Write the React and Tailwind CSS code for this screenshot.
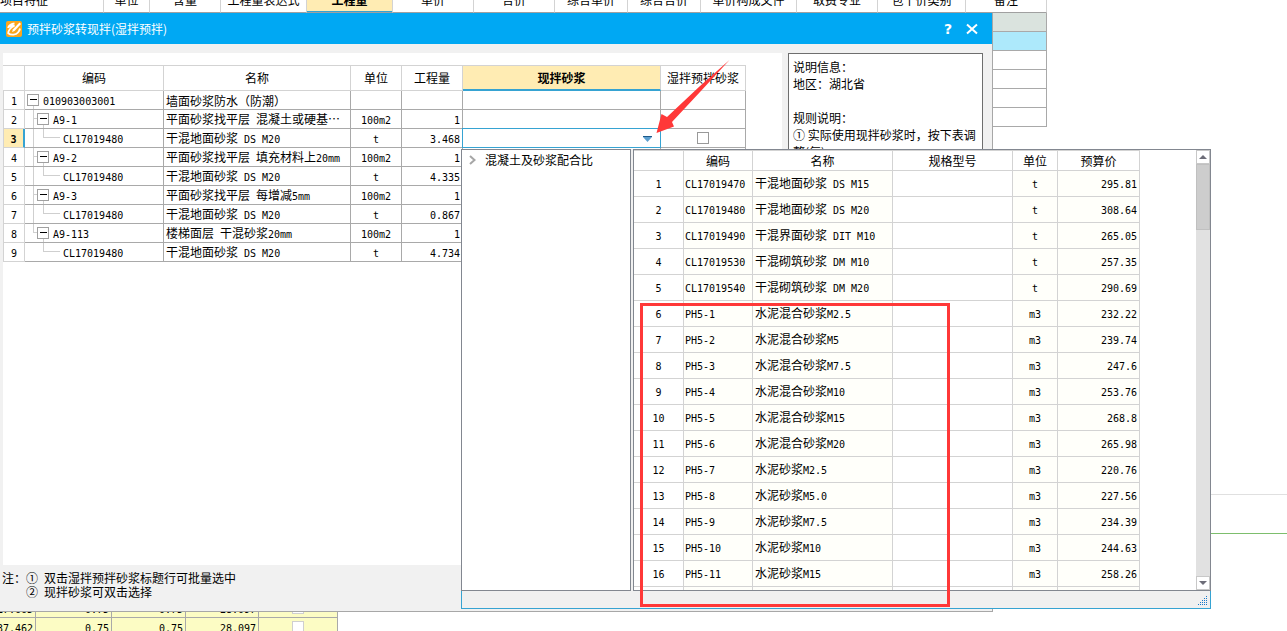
import React, { useState } from 'react';

const topColumns = [
  { label: '项目特征', width: 'w-[104px]' },
  { label: '单位', width: 'w-[46px]' },
  { label: '含量', width: 'w-[71px]' },
  { label: '工程量表达式', width: 'w-[86px]' },
  { label: '工程量', width: 'w-[86px]' },
  { label: '单价', width: 'w-[81px]' },
  { label: '合价', width: 'w-[81px]' },
  { label: '综合单价', width: 'w-[73px]' },
  { label: '综合合价', width: 'w-[73px]' },
  { label: '单价构成文件', width: 'w-[96px]' },
  { label: '取费专业', width: 'w-[81px]' },
  { label: '包干价类别', width: 'w-[88px]' },
  { label: '备注', width: 'w-[81px]' },
];

const backRows = ['bg-[#dae3de]', 'bg-[#ade9fb]', 'bg-white', 'bg-white', 'bg-white', 'bg-white'];

const summaryRows = [
  ['17.665', '0.75', '0.75', '28.097'],
  ['37.462', '0.75', '0.75', '28.097'],
];

const items = [
  { level: 0, code: '010903003001', name: '墙面砂浆防水（防潮）', unit: '', qty: '' },
  { level: 1, code: 'A9-1', name: '平面砂浆找平层 混凝土或硬基…', unit: '100m2', qty: '1' },
  { level: 2, code: 'CL17019480', name: '干混地面砂浆 DS M20', unit: 't', qty: '3.468' },
  { level: 1, code: 'A9-2', name: '平面砂浆找平层 填充材料上20mm', unit: '100m2', qty: '1' },
  { level: 2, code: 'CL17019480', name: '干混地面砂浆 DS M20', unit: 't', qty: '4.335' },
  { level: 1, code: 'A9-3', name: '平面砂浆找平层 每增减5mm', unit: '100m2', qty: '1' },
  { level: 2, code: 'CL17019480', name: '干混地面砂浆 DS M20', unit: 't', qty: '0.867' },
  { level: 1, code: 'A9-113', name: '楼梯面层 干混砂浆20mm', unit: '100m2', qty: '1', last: true },
  { level: 2, code: 'CL17019480', name: '干混地面砂浆 DS M20', unit: 't', qty: '4.734', last: true },
];

const materials = [
  ['CL17019470', '干混地面砂浆 DS M15', 't', '295.81'],
  ['CL17019480', '干混地面砂浆 DS M20', 't', '308.64'],
  ['CL17019490', '干混界面砂浆 DIT M10', 't', '265.05'],
  ['CL17019530', '干混砌筑砂浆 DM M10', 't', '257.35'],
  ['CL17019540', '干混砌筑砂浆 DM M20', 't', '290.69'],
  ['PH5-1', '水泥混合砂浆M2.5', 'm3', '232.22'],
  ['PH5-2', '水泥混合砂浆M5', 'm3', '239.74'],
  ['PH5-3', '水泥混合砂浆M7.5', 'm3', '247.6'],
  ['PH5-4', '水泥混合砂浆M10', 'm3', '253.76'],
  ['PH5-5', '水泥混合砂浆M15', 'm3', '268.8'],
  ['PH5-6', '水泥混合砂浆M20', 'm3', '265.98'],
  ['PH5-7', '水泥砂浆M2.5', 'm3', '220.76'],
  ['PH5-8', '水泥砂浆M5.0', 'm3', '227.56'],
  ['PH5-9', '水泥砂浆M7.5', 'm3', '234.39'],
  ['PH5-10', '水泥砂浆M10', 'm3', '244.63'],
  ['PH5-11', '水泥砂浆M15', 'm3', '258.26'],
];

// Latin runs use a half-width mono face next to the full-width Chinese
const Mixed = ({ text }) => (
  <>
    {text.split(/([\x20-\x7e]+)/).map((part, i) =>
      i % 2 ? (
        <span key={i} className="whitespace-pre font-['DejaVu_Sans_Mono',monospace] text-[10px]">{part}</span>
      ) : (
        part
      )
    )}
  </>
);

const TreeGuide = ({ item }) => {
  if (item.level === 0) {
    return (
      <svg width="15" height="18" viewBox="0 0 15 18" shapeRendering="crispEdges">
        <path d="M8.5 15V18" stroke="#cfcfcf" />
        <rect x="2.5" y="3.5" width="11" height="11" fill="#fff" stroke="#a0a0a0" />
        <path d="M5 8.5H12" stroke="#000" />
      </svg>
    );
  }
  if (item.level === 1) {
    return (
      <svg width="25" height="18" viewBox="0 0 25 18" shapeRendering="crispEdges">
        <path d={item.last ? 'M8.5 0V8.5H12' : 'M8.5 0V18M8.5 8.5H12'} fill="none" stroke="#cfcfcf" />
        <path d="M18.5 15V18" stroke="#cfcfcf" />
        <rect x="12.5" y="3.5" width="11" height="11" fill="#fff" stroke="#a0a0a0" />
        <path d="M15 8.5H22" stroke="#000" />
      </svg>
    );
  }
  return (
    <svg width="35" height="18" viewBox="0 0 35 18" shapeRendering="crispEdges">
      {!item.last && <path d="M8.5 0V18" stroke="#cfcfcf" />}
      <path d="M18.5 0V8.5H35" fill="none" stroke="#cfcfcf" />
    </svg>
  );
};

const BackgroundSheet = () => (
  <div className="flex h-full flex-col">
    <div className="shrink-0 overflow-hidden">
      <table className="-mt-3 w-[1047px] table-fixed border-separate border-spacing-0">
        <thead>
          <tr className="h-[25px]">
            {topColumns.map((col, i) => (
              <th
                key={col.label}
                className={`${col.width} whitespace-nowrap border-b border-r border-b-[#a0a0a0] border-r-[#d3d3d3] p-0 leading-[14px] ${
                  i === 4 ? 'bg-[#ffecb3] font-bold shadow-[inset_0_-1px_#36a3d2]' : 'font-normal'
                } ${i === 0 ? 'text-left' : 'text-center'}`}
              >
                {col.label}
              </th>
            ))}
          </tr>
        </thead>
        <tbody>
          {backRows.map((bg, i) => (
            <tr key={i} className={`h-[19px] ${bg}`}>
              <td colSpan={13} className="border-b border-r border-[#a9a9a9] p-0"></td>
            </tr>
          ))}
        </tbody>
      </table>
    </div>
    <div className="flex-1"></div>
    <div className="h-10 shrink-0 border-b border-t border-b-[#7dbe6d] border-t-[#e0e0e0]"></div>
    <div className="h-[97px] shrink-0 overflow-hidden pt-[65px]">
      <table className="w-[338px] table-fixed border-separate border-spacing-0 bg-[#fcfcc4]">
        <tbody>
          {summaryRows.map((row, i) => (
            <tr key={i} className="h-[19px] font-['DejaVu_Sans_Mono',monospace] text-[10px]">
              {row.map((value, j) => (
                <td
                  key={j}
                  className={`border-b border-r border-[#a9a9a9] p-0 pr-[2px] pt-[3px] ${
                    ['w-[36px]', 'w-[76px]', 'w-[74px]', 'w-[73px]'][j]
                  }`}
                >
                  <div className="flex justify-end overflow-hidden leading-[14px]">{value}</div>
                </td>
              ))}
              <td className="border-b border-r border-[#a9a9a9] p-0">
                <input
                  type="checkbox"
                  aria-label="选择"
                  className="mx-auto block h-3 w-3 appearance-none border border-[#cfcfcf] bg-white"
                />
              </td>
            </tr>
          ))}
        </tbody>
      </table>
    </div>
  </div>
);

const ItemTable = () => {
  const [checked, setChecked] = useState(false);
  const head = 'border-b border-r border-t border-[#d3d3d3] p-0 font-normal';
  const cell = 'border-b border-r border-[#a9a9a9] p-0';

  return (
    <table className="w-[743px] table-fixed border-separate border-spacing-0">
      <thead>
        <tr className="h-[26px] whitespace-nowrap">
          <th className={`${head} w-[22px]`}></th>
          <th className={`${head} w-[139px]`}>编码</th>
          <th className={`${head} w-[187px]`}>名称</th>
          <th className={`${head} w-[51px]`}>单位</th>
          <th className={`${head} w-[61px]`}>工程量</th>
          <th className="w-[198px] border-b-2 border-r border-t border-b-[#36a3d2] border-r-[#d3d3d3] border-t-[#d3d3d3] bg-[#ffecb3] p-0 font-bold">
            现拌砂浆
          </th>
          <th className={`${head} w-[85px]`}>湿拌预拌砂浆</th>
        </tr>
      </thead>
      <tbody>
        {items.map((item, i) => (
          <tr key={i} className="h-[19px]">
            <td
              className={`border-b border-l border-[#d3d3d3] p-0 pt-[3px] text-center font-['DejaVu_Sans_Mono',monospace] text-[10px] leading-[14px] ${
                i === 2 ? 'border-r-2 border-r-[#36a3d2] bg-[#ffecb3] font-bold' : 'border-r'
              }`}
            >
              {i + 1}
            </td>
            <td className={cell}>
              <div className="flex h-[18px] items-center gap-[3px] font-['DejaVu_Sans_Mono',monospace] text-[10px]">
                {item.level < 2 ? (
                  <button aria-label="折叠">
                    <TreeGuide item={item} />
                  </button>
                ) : (
                  <TreeGuide item={item} />
                )}
                <span className="pt-[3px] leading-[14px]">{item.code}</span>
              </div>
            </td>
            <td className={`${cell} whitespace-nowrap pl-[2px] pt-[2px] leading-[14px]`}>
              <Mixed text={item.name} />
            </td>
            <td className={`${cell} pt-[2px] text-center leading-[14px]`}>
              <Mixed text={item.unit} />
            </td>
            <td className={`${cell} pr-[2px] pt-[2px] text-right leading-[14px]`}>
              <Mixed text={item.qty} />
            </td>
            {i === 2 ? (
              <td className="p-0">
                <div className="relative -ml-px -mt-px h-5 border border-[#36a3d2] bg-white">
                  <select aria-label="现拌砂浆" className="block h-full w-full appearance-none outline-none">
                    <option></option>
                  </select>
                  <svg className="pointer-events-none absolute right-2 top-[7px]" width="9" height="6" viewBox="0 0 9 6">
                    <path d="M0 1H9L4.500 6Z" fill="#5b9fd0" />
                    <path d="M0 0.500H9" stroke="#1d5a8a" />
                  </svg>
                </div>
              </td>
            ) : (
              <td className={cell}></td>
            )}
            <td className={cell}>
              {i === 2 && (
                <input
                  type="checkbox"
                  aria-label="湿拌预拌砂浆"
                  checked={checked}
                  onChange={() => setChecked(!checked)}
                  className="mx-auto block h-3 w-3 appearance-none border border-[#999999] bg-white checked:bg-[#36a3d2]"
                />
              )}
            </td>
          </tr>
        ))}
      </tbody>
    </table>
  );
};

const ConvertDialog = () => (
  <div className="absolute left-0 top-[13px] flex h-[599px] w-[993px] flex-col border-b border-r border-[#a7a7a7] bg-[#f1f1f1]">
    <div className="flex h-[31px] shrink-0 items-center bg-[#00a8f3] pl-[6px] pr-[14px] text-white">
      <svg width="16" height="16" viewBox="0 0 16 16">
        <rect width="16" height="16" rx="2" fill="#fba61c" />
        <path d="M13.500 1.500L15 3L8.500 10L6 11L7 8.200Z" fill="#fff" />
        <path
          d="M8.500 2.500C5.500 3 3.200 4.300 2.200 6.300C4.500 5 6.500 4.800 8 5C5 6.500 2.500 9 2.200 12.200C5 14.500 10 14 12 11.500C13.300 10 13.800 8.800 14 7.500"
          fill="none"
          stroke="#fff"
          strokeWidth="1.8"
          strokeLinejoin="round"
        />
      </svg>
      <h1 className="ml-[5px] flex-1 text-xs">预拌砂浆转现拌(湿拌预拌)</h1>
      <button aria-label="帮助" className="mr-[14px] font-['DejaVu_Sans',sans-serif] text-sm font-bold">?</button>
      <button aria-label="关闭">
        <svg width="12" height="12" viewBox="0 0 12 12">
          <path d="M1 1.500L11 10.500M11 1.500L1 10.500" stroke="#fff" strokeWidth="2" />
        </svg>
      </button>
    </div>
    <div className="flex min-h-0 flex-1 pl-[3px] pr-[9px] pt-[9px]">
      <div className="min-w-0 flex-1 bg-white pt-3">
        <ItemTable />
      </div>
      <div className="ml-[6px] w-[195px] overflow-hidden whitespace-nowrap border border-[#6e6e6e] bg-white px-1 pt-1 leading-[17px]">
        <p>说明信息：</p>
        <p>地区：湖北省</p>
        <br />
        <p>规则说明：</p>
        <p>① 实际使用现拌砂浆时，按下表调</p>
        <p>整(每):</p>
      </div>
    </div>
    <div className="h-[46px] shrink-0 pl-[2px] pt-[6px] leading-[14px]">
      <p className="h-[14px]"><Mixed text="注：① 双击湿拌预拌砂浆标题行可批量选中" /></p>
      <p className="h-[14px] pl-6"><Mixed text="② 现拌砂浆可双击选择" /></p>
    </div>
  </div>
);

const MaterialPopup = () => {
  const head = 'border-b border-r border-t border-[#d3d3d3] p-0 font-normal leading-[14px]';
  const cell = 'border-b border-r border-[#d3d3d3] p-0 leading-[14px]';
  const tinted = `${cell} bg-[#fffffa]`;

  return (
    <div className="absolute left-[461px] top-[149px] flex h-[460px] w-[750px] flex-col bg-[#f0f0f0]">
      <div className="flex min-h-0 flex-1 gap-[2px]">
        <div className="w-[170px] border border-[#828790] bg-white pt-[2px]">
          <button className="flex items-center gap-[9px] pl-[7px] leading-4">
            <svg width="7" height="10" viewBox="0 0 7 10">
              <path d="M1 1L5.500 5L1 9" fill="none" stroke="#a6a6a6" strokeWidth="2" />
            </svg>
            混凝土及砂浆配合比
          </button>
        </div>
        <div className="flex flex-1 overflow-hidden border border-[#828790] bg-white">
          <div className="flex-1 overflow-hidden">
            <table className="w-[506px] table-fixed border-separate border-spacing-0">
              <thead>
                <tr className="h-[21px]">
                  <th className={`${head} w-[50px]`}></th>
                  <th className={`${head} w-[69px]`}>编码</th>
                  <th className={`${head} w-[140px]`}>名称</th>
                  <th className={`${head} w-[120px]`}>规格型号</th>
                  <th className={`${head} w-[45px]`}>单位</th>
                  <th className={`${head} w-[82px]`}>预算价</th>
                </tr>
              </thead>
              <tbody>
                {materials.map(([code, name, unit, price], i) => (
                  <tr key={code} className="h-[26px] whitespace-nowrap">
                    <td className={`${cell} text-center`}><Mixed text={String(i + 1)} /></td>
                    <td className={`${tinted} pl-px`}><Mixed text={code} /></td>
                    <td className={`${tinted} pl-[2px]`}><Mixed text={name} /></td>
                    <td className={cell}></td>
                    <td className={`${tinted} text-center`}><Mixed text={unit} /></td>
                    <td className={`${tinted} pr-[2px] text-right`}><Mixed text={price} /></td>
                  </tr>
                ))}
                <tr className="h-[26px]">
                  <td className={cell}></td>
                  <td className={tinted}></td>
                  <td className={tinted}></td>
                  <td className={cell}></td>
                  <td className={tinted}></td>
                  <td className={tinted}></td>
                </tr>
              </tbody>
            </table>
          </div>
          <div className="flex w-[14px] flex-col bg-[#e1e1e1]">
            <button aria-label="向上滚动" className="flex h-[14px] items-center justify-center border border-[#c8c8c8] bg-white">
              <svg width="8" height="4" viewBox="0 0 8 4"><path d="M0 4H8L4 0Z" fill="#6d6d78" /></svg>
            </button>
            <div className="h-[66px] border border-[#c0c0c0] bg-[#cdcdcd]"></div>
            <div className="flex-1"></div>
            <button aria-label="向下滚动" className="flex h-[14px] items-center justify-center border border-[#c8c8c8] bg-white">
              <svg width="8" height="4" viewBox="0 0 8 4"><path d="M0 0H8L4 4Z" fill="#6d6d78" /></svg>
            </button>
          </div>
        </div>
      </div>
      <div className="flex h-[18px] shrink-0 items-end justify-end border-x border-b border-[#36a3d2] pb-[3px] pr-[3px]">
        <svg width="9" height="9" viewBox="0 0 9 9" shapeRendering="crispEdges">
          <path
            d="M8 0h1v1h-1zM6 2h1v1h-1zM8 2h1v1h-1zM4 4h1v1h-1zM6 4h1v1h-1zM8 4h1v1h-1zM2 6h1v1h-1zM4 6h1v1h-1zM6 6h1v1h-1zM8 6h1v1h-1zM0 8h1v1h-1zM2 8h1v1h-1zM4 8h1v1h-1zM6 8h1v1h-1zM8 8h1v1h-1z"
            fill="#1979ca"
          />
        </svg>
      </div>
    </div>
  );
};

const App = () => {
  return (
    <div
      lang="zh-CN"
      className="relative h-screen overflow-hidden bg-white font-['Noto_Sans_CJK_SC',sans-serif] text-xs text-black"
    >
      <BackgroundSheet />
      <ConvertDialog />
      <MaterialPopup />

      {/* Annotations */}
      <div className="pointer-events-none absolute left-[640px] top-[303px] h-[304px] w-[310px] border-[3px] border-[#ff3838]"></div>
      <svg className="pointer-events-none absolute left-[656px] top-[60px]" width="74" height="74" viewBox="0 0 74 74">
        <path d="M0.500 73L5.500 54L11 57L44 26L73.500 0L44 32L16 62L18 66.500Z" fill="#ff3838" />
      </svg>
    </div>
  );
};

export default App;
